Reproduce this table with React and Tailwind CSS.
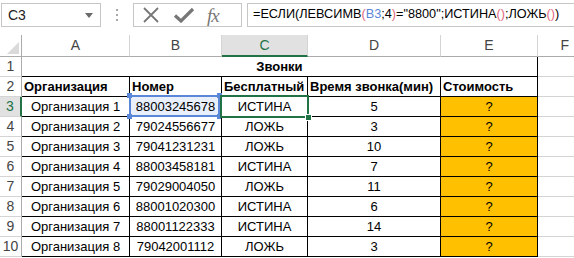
import React from 'react';

const rows = [
  ["Организация 1", "88003245678", "ИСТИНА", "5"],
  ["Организация 2", "79024556677", "ЛОЖЬ", "3"],
  ["Организация 3", "79041231231", "ЛОЖЬ", "10"],
  ["Организация 4", "88003458181", "ИСТИНА", "7"],
  ["Организация 5", "79029004050", "ЛОЖЬ", "11"],
  ["Организация 6", "88001020300", "ИСТИНА", "6"],
  ["Организация 7", "88001122333", "ИСТИНА", "14"],
  ["Организация 8", "79042001112", "ЛОЖЬ", "3"],
];

const cols = ["A", "B", "C", "D", "E"];

function Corner({ className }) {
  return <span className={`absolute w-[5px] h-[5px] bg-[#5b87d8] ${className}`} />;
}

export default function App() {
  return (
    <div className="w-[574px] h-[258px] overflow-hidden bg-white text-black font-['Liberation_Sans',Arial,sans-serif]">
      {/* formula bar */}
      <div className="flex items-start h-[35px] pt-[3px] pl-[1px]">
        <div className="flex items-center justify-between w-[100px] h-[24px] border border-[#c6c6c6] pl-[6px] pr-[7px] text-[14px] text-[#222]">
          <span>C3</span>
          <svg width="8" height="5" viewBox="0 0 8 5"><path d="M0 0h8L4 5z" fill="#6a6a6a" /></svg>
        </div>
        <div className="w-[32px] h-[24px] flex flex-col items-center justify-center gap-[3px]">
          <span className="w-[2px] h-[2px] bg-[#a8a8a8]" />
          <span className="w-[2px] h-[2px] bg-[#a8a8a8]" />
          <span className="w-[2px] h-[2px] bg-[#a8a8a8]" />
        </div>
        <div className="flex items-center w-[109px] h-[24px] border border-[#c6c6c6]">
          <svg className="ml-[8px]" width="18" height="16" viewBox="0 0 18 16">
            <path d="M2 1L16 15M16 1L2 15" stroke="#777" strokeWidth="1.8" fill="none" />
          </svg>
          <svg className="ml-[13px]" width="22" height="16" viewBox="0 0 22 16">
            <path d="M2 8.5L8 14L20 2" stroke="#777" strokeWidth="3.2" fill="none" strokeLinejoin="miter" />
          </svg>
          <span className="ml-[12px] text-[19px] leading-none italic text-[#777] font-['Liberation_Serif',serif] tracking-[-1px]">fx</span>
        </div>
        <div className="ml-[5px] flex-1 h-[24px] border border-r-0 border-[#c6c6c6] pl-[5px] flex items-center text-[12.7px] whitespace-nowrap overflow-hidden">
          <span>=ЕСЛИ(ЛЕВСИМВ</span>
          <span className="text-[#e06a80]">(</span>
          <span className="text-[#5b87d8]">B3</span>
          <span>;4</span>
          <span className="text-[#e06a80]">)</span>
          <span>="8800";ИСТИНА</span>
          <span className="text-[#e06a80]">()</span>
          <span>;ЛОЖЬ</span>
          <span className="text-[#e06a80]">()</span>
          <span>)</span>
        </div>
      </div>

      {/* sheet */}
      <div className="w-[574px] grid grid-cols-[22px_108px_92px_86px_133px_97px_36px] grid-rows-[22px_repeat(10,20px)] text-[13px]">
        {/* column headers */}
        <div className="relative border-r border-b border-[#ababab] bg-white">
          <svg className="absolute right-[2px] bottom-[2px]" width="12" height="12" viewBox="0 0 12 12"><path d="M12 0V12H0z" fill="#dadada" /></svg>
        </div>
        {cols.map((c) =>
          c === "C" ? (
            <div key={c} className="flex items-center justify-center bg-[#e1e1e1] border-r border-[#d4d4d4] border-b-2 border-b-[#217346] text-[#217346] text-[14px]">{c}</div>
          ) : (
            <div key={c} className="flex items-center justify-center border-r border-[#d4d4d4] border-b border-b-[#ababab] text-[#444] text-[14px]">{c}</div>
          )
        )}
        <div className="flex items-center justify-end pr-[5px] border-b border-b-[#ababab] text-[#444] text-[14px]">F</div>

        {/* row 1 */}
        <div className="flex items-center justify-center border-r border-r-[#ababab] border-b border-[#d4d4d4] text-[#444] text-[14px]">1</div>
        <div className="col-span-5 flex items-center justify-center font-bold border-r border-b border-black">Звонки</div>
        <div className="border-b border-[#d4d4d4]" />

        {/* row 2 */}
        <div className="flex items-center justify-center border-r border-r-[#ababab] border-b border-[#d4d4d4] text-[#444] text-[14px]">2</div>
        {["Организация", "Номер", "Бесплатный", "Время звонка(мин)", "Стоимость"].map((h) => (
          <div key={h} className="flex items-center pl-[2px] font-bold whitespace-nowrap overflow-hidden border-r border-b border-black">{h}</div>
        ))}
        <div className="border-b border-[#d4d4d4]" />

        {rows.map((r, i) => {
          const n = i + 3;
          const sel = n === 3;
          return (
            <React.Fragment key={n}>
              {sel ? (
                <div className="flex items-center justify-center bg-[#e1e1e1] border-r-2 border-r-[#217346] border-b border-[#d4d4d4] text-[#217346] text-[14px]">{n}</div>
              ) : (
                <div className="flex items-center justify-center border-r border-r-[#ababab] border-b border-[#d4d4d4] text-[#444] text-[14px]">{n}</div>
              )}
              <div className="flex items-center justify-center whitespace-nowrap border-r border-b border-black">{r[0]}</div>
              <div className={`relative flex items-center justify-center border-r border-b border-black ${sel ? "bg-[#eaf0fb]" : ""}`}>
                {sel && (
                  <>
                    <span className="absolute left-[-1px] top-[-2px] right-[1px] bottom-[-1px] border-2 border-[#5b87d8]" />
                    <Corner className="left-[-3px] top-[-4px]" />
                    <Corner className="right-[-1px] top-[-4px]" />
                    <Corner className="left-[-3px] bottom-[-3px]" />
                    <Corner className="right-[-1px] bottom-[-3px]" />
                  </>
                )}
                <span className="relative">{r[1]}</span>
              </div>
              <div className="relative flex items-center justify-center border-r border-b border-black">
                {sel && (
                  <>
                    <span className="absolute z-10 left-[-2px] top-[-2px] right-[-2px] bottom-[-2px] border-2 border-[#217346]" />
                    <span className="absolute z-20 right-[-5px] bottom-[-5px] w-[7px] h-[7px] bg-[#217346] border border-white" />
                  </>
                )}
                {r[2]}
              </div>
              <div className="flex items-center justify-center border-r border-b border-black">{r[3]}</div>
              <div className="flex items-center justify-center bg-[#ffc000] border-r border-b border-black">?</div>
              <div className="border-b border-[#d4d4d4]" />
            </React.Fragment>
          );
        })}
      </div>
    </div>
  );
}
